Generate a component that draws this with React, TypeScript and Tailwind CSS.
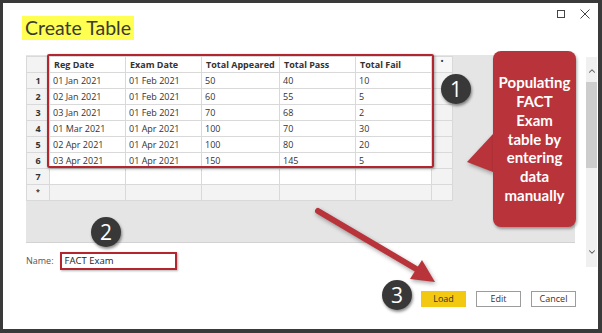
import { ChevronUp, ChevronDown } from 'lucide-react'

const ROWS = [
  ['01 Jan 2021', '01 Feb 2021', '50', '40', '10'],
  ['02 Jan 2021', '01 Feb 2021', '60', '55', '5'],
  ['03 Jan 2021', '01 Feb 2021', '70', '68', '2'],
  ['01 Mar 2021', '01 Apr 2021', '100', '70', '30'],
  ['02 Apr 2021', '01 Apr 2021', '100', '80', '20'],
  ['03 Apr 2021', '01 Apr 2021', '150', '145', '5'],
]
const HEADERS = ['Reg Date', 'Exam Date', 'Total Appeared', 'Total Pass', 'Total Fail']
const COLS = ['w-[76px]', 'w-[76px]', 'w-[78px]', 'w-[76px]', 'w-[76px]']

const cell = 'h-[16px] border-r border-b border-[#d9d9d9] flex items-center'

function Badge({ n, className }: { n: number; className: string }) {
  return (
    <div className={`absolute w-[30px] h-[30px] rounded-full bg-[#383838] shadow-[1px_2px_3px_rgba(0,0,0,0.45)] flex items-center justify-center text-white text-[21px] leading-none ${className}`}>
      {n}
    </div>
  )
}

export default function App() {
  return (
    <div className="relative w-[602px] h-[333px] bg-[#3a3a3a] pt-[3px] pl-[3px] pr-[4px] pb-[4px] font-['Open_Sans',sans-serif] text-[#333] overflow-hidden">
      <div className="w-full h-full bg-white flex flex-col">
        {/* title bar */}
        <div className="h-[52px] flex justify-between items-start shrink-0">
          <div className="ml-[19px] mt-[13px] h-[24px] px-[3px] bg-[#ffff52] flex items-center">
            <span className="font-['Lato',sans-serif] text-[19.5px] leading-none text-[#3a3a30]">Create Table</span>
          </div>
          <div className="flex items-center gap-[15px] mt-[6px] mr-[8px]">
            <div className="w-[8px] h-[8px] border border-[#444]" />
            <svg width="10" height="10" viewBox="0 0 10 10" className="stroke-[#444]">
              <path d="M0.5 0.5 L9.5 9.5 M9.5 0.5 L0.5 9.5" strokeWidth="1" />
            </svg>
          </div>
        </div>

        <div className="flex flex-1">
          <div className="ml-[23px] w-[549px] flex flex-col">
            {/* grid panel */}
            <div className="h-[188px] bg-[#e5e5e5] border-b border-[#d2d2d2]">
              <div className="inline-flex flex-col border-t border-l border-[#d9d9d9] bg-white text-[9px]">
                <div className="flex font-bold">
                  <div className={`${cell} w-[23px] bg-[#f3f3f3]`} />
                  {HEADERS.map((h, i) => (
                    <div key={h} className={`${cell} ${COLS[i]} pl-[4px]`}>{h}</div>
                  ))}
                  <div className={`${cell} w-[21px] bg-[#f7f7f7] justify-center items-start text-[7px]`}>•</div>
                </div>
                {ROWS.map((r, ri) => (
                  <div key={ri} className="flex">
                    <div className={`${cell} w-[23px] bg-[#f3f3f3] justify-center font-bold`}>{ri + 1}</div>
                    {r.map((v, i) => (
                      <div key={i} className={`${cell} ${COLS[i]} pl-[3px]`}>{v}</div>
                    ))}
                    <div className={`${cell} w-[21px] bg-[#f3f3f3]`} />
                  </div>
                ))}
                <div className="flex">
                  <div className={`${cell} w-[23px] bg-[#f3f3f3] justify-center font-bold`}>7</div>
                  {COLS.map((c, i) => <div key={i} className={`${cell} ${c}`} />)}
                  <div className={`${cell} w-[21px] bg-[#f3f3f3]`} />
                </div>
                <div className="flex">
                  <div className={`${cell} w-[23px] bg-[#f3f3f3] justify-center font-bold text-[7px]`}>*</div>
                  {COLS.map((c, i) => <div key={i} className={`${cell} ${c} bg-[#f3f3f3]`} />)}
                  <div className={`${cell} w-[21px] bg-[#f3f3f3]`} />
                </div>
              </div>
            </div>

            {/* name */}
            <div className="mt-[9px] flex items-center gap-[6px]">
              <span className="text-[9px] text-[#555]">Name:</span>
              <div className="w-[117px] h-[18px] border-2 border-[#b1262f] shadow-[1px_1px_2px_rgba(0,0,0,0.3)] flex items-center pl-[3px] text-[9.5px] text-[#222]">
                FACT Exam
              </div>
            </div>

            {/* buttons */}
            <div className="mt-[21px] flex justify-end gap-[10px] text-[9px] mr-[-1px]">
              <div className="w-[45px] h-[16px] bg-[#f2c811] flex items-center justify-center">Load</div>
              <div className="w-[45px] h-[16px] border border-[#9c9c9c] flex items-center justify-center">Edit</div>
              <div className="w-[45px] h-[16px] border border-[#9c9c9c] flex items-center justify-center">Cancel</div>
            </div>
          </div>

          {/* scrollbar */}
          <div className="ml-[11px] mt-[2px] w-[11px] h-[210px] bg-[#f0f0f0] flex flex-col items-center">
            <ChevronUp size={10} strokeWidth={2.5} className="text-[#555] mt-[9px]" />
            <div className="w-full h-[86px] bg-[#cdcdcd] mt-[6px]" />
            <div className="flex-1" />
            <ChevronDown size={10} strokeWidth={2.5} className="text-[#555] mb-[10px]" />
          </div>
        </div>
      </div>

      {/* annotations */}
      <div className="absolute left-[47px] top-[54px] w-[387px] h-[114px] border-2 border-[#b1262f] rounded-[2px] shadow-[1px_1px_3px_rgba(0,0,0,0.35)]" />

      <svg className="absolute left-0 top-0 drop-shadow-[1px_2px_2px_rgba(0,0,0,0.35)]" width="602" height="333" viewBox="0 0 602 333">
        <path d="M493 134 L467 162 L493 172 Z" fill="#b8333a" />
        <line x1="318" y1="211" x2="418" y2="270" stroke="#b8333a" strokeWidth="6" strokeLinecap="round" />
        <path d="M435 282 L410 279 L422 260 Z" fill="#b8333a" />
      </svg>

      <div className="absolute left-[493px] top-[51px] w-[83px] h-[176px] rounded-[8px] bg-[#b8333a] shadow-[1px_2px_3px_rgba(0,0,0,0.35)] flex items-center justify-center text-center text-white font-['Lato',sans-serif] font-bold text-[15px] leading-[18.8px]">
        Populating<br />FACT<br />Exam<br />table by<br />entering<br />data<br />manually
      </div>

      <Badge n={1} className="left-[441px] top-[74px]" />
      <Badge n={2} className="left-[91px] top-[217px]" />
      <Badge n={3} className="left-[382px] top-[280px]" />
    </div>
  )
}
